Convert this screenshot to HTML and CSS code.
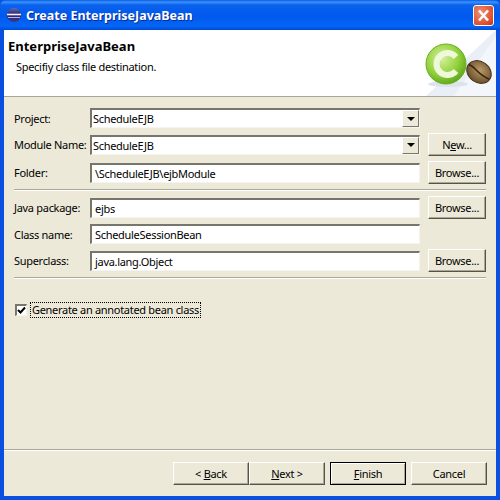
FILE: index.html
```html
<!DOCTYPE html>
<html lang="en">
<head>
    <meta charset="UTF-8">
    <title>Create EnterpriseJavaBean</title>
    <link rel="stylesheet" href="styles.css">
</head>
<body>
<div class="window">
    <div class="titlebar">
        <svg class="app-icon" width="16" height="16" viewBox="0 0 16 16">
            <defs>
                <linearGradient id="eclipseFill" x1="0" y1="0" x2="0" y2="1">
                    <stop offset="0" stop-color="#6a68b8"/>
                    <stop offset="0.45" stop-color="#27256e"/>
                    <stop offset="1" stop-color="#3a3688"/>
                </linearGradient>
            </defs>
            <circle cx="8" cy="8" r="7" fill="url(#eclipseFill)"/>
            <path d="M1 7.5h14" stroke="#f4f2ff" stroke-width="1.6"/>
            <path d="M2 10.5h12" stroke="#b8b4e4" stroke-width="1"/>
        </svg>
        <span class="title">Create EnterpriseJavaBean</span>
        <div class="close">
            <svg width="19" height="19" viewBox="0 0 19 19">
                <path d="M5 4.5l9 10M14 4.5l-9 10" stroke="#fff" stroke-width="2.6"/>
            </svg>
        </div>
    </div>

    <div class="content">
        <div class="banner">
            <div class="banner-text">
                <h1>EnterpriseJavaBean</h1>
                <p>Specifiy class file destination.</p>
            </div>
            <svg class="banner-art" width="76" height="66" viewBox="0 0 76 66">
                <defs>
                    <radialGradient id="ballFill" cx="0.4" cy="0.35" r="0.75">
                        <stop offset="0" stop-color="#d8f0a0"/>
                        <stop offset="0.55" stop-color="#93d23c"/>
                        <stop offset="1" stop-color="#4f9a12"/>
                    </radialGradient>
                    <radialGradient id="beanFill" cx="0.5" cy="0.4" r="0.7">
                        <stop offset="0" stop-color="#b99a6a"/>
                        <stop offset="1" stop-color="#5c4020"/>
                    </radialGradient>
                </defs>
                <polygon points="76,0 76,66 6,66" fill="#eaeff7"/>
                <polygon points="76,6 76,66 34,66" fill="#f3f6fb"/>
                <ellipse cx="28" cy="54" rx="20" ry="3" fill="#dde3ea"/>
                <circle cx="26" cy="34" r="20" fill="url(#ballFill)" stroke="#6cae24"/>
                <path d="M36 27a11 11 0 1 0 0 14" fill="none" stroke="#eef8da" stroke-width="6"/>
                <g transform="rotate(35 59 42)">
                    <ellipse cx="59" cy="42" rx="13" ry="10.5" fill="url(#beanFill)" stroke="#4a3218"/>
                    <path d="M46.5 42c5-3 10 3 25 0" fill="none" stroke="#3a260f" stroke-width="1.6"/>
                </g>
            </svg>
        </div>

        <div class="form">
            <label>Project:</label>
            <div class="combo"><span>ScheduleEJB</span><div class="arrow"></div></div>
            <div></div>

            <label>Module Name:</label>
            <div class="combo"><span>ScheduleEJB</span><div class="arrow"></div></div>
            <button class="btn">N<u>e</u>w...</button>

            <label>Folder:</label>
            <div class="field">\ScheduleEJB\ejbModule</div>
            <button class="btn">Browse...</button>

            <hr class="sep wide">

            <label>Java package:</label>
            <div class="field">ejbs</div>
            <button class="btn">Browse...</button>

            <label>Class name:</label>
            <div class="field">ScheduleSessionBean</div>
            <div></div>

            <label>Superclass:</label>
            <div class="field">java.lang.Object</div>
            <button class="btn">Browse...</button>

            <hr class="sep wide">
        </div>

        <div class="check-row">
            <div class="checkbox">
                <svg width="9" height="9" viewBox="0 0 9 9"><path d="M1 4l2.5 2.5L8 1.5" fill="none" stroke="#000" stroke-width="2"/></svg>
            </div>
            <span class="check-label">Generate an annotated bean class</span>
        </div>

        <div class="footer">
            <hr class="sep">
            <div class="footer-buttons">
                <div class="nav-group">
                    <button class="btn wizard">&lt; <u>B</u>ack</button>
                    <button class="btn wizard"><u>N</u>ext &gt;</button>
                </div>
                <button class="btn wizard default"><u>F</u>inish</button>
                <button class="btn wizard">Cancel</button>
            </div>
        </div>
    </div>
</div>
</body>
</html>
```

FILE: styles.css
```css
* {
    box-sizing: border-box;
}
html, body {
    margin: 0;
    height: 100%;
}
body {
    font-family: "Noto Sans", "Liberation Sans", sans-serif;
    font-size: 11px;
    letter-spacing: -0.3px;
    color: #000;
    background-color: #ece9d8;
}
.window {
    height: 500px;
    display: flex;
    flex-direction: column;
    background: #0a4fe0;
    padding: 0 4px 4px 4px;
}
.titlebar {
    height: 30px;
    margin: 0 -4px;
    padding: 0 6px;
    display: flex;
    align-items: center;
    background: linear-gradient(#0a5ae0 0, #3a93ff 2px, #0a62ec 5px, #0058ee 16px, #0466f5 26px, #0048d8 30px);
    border-radius: 6px 6px 0 0;
}
.app-icon {
    flex: none;
}
.title {
    margin-left: 4px;
    flex: 1;
    color: #fff;
    font-size: 12.5px;
    font-weight: bold;
    letter-spacing: 0;
    text-shadow: 1px 1px 0 #0a2a90;
}
.close {
    width: 21px;
    height: 21px;
    background: radial-gradient(circle at 35% 35%, #ee9078, #de4f2c 70%, #c0300f);
    border: 1px solid #fff;
    border-radius: 3px;
    display: flex;
    align-items: center;
    justify-content: center;
}
.content {
    flex: 1;
    background-color: #ece9d8;
    display: flex;
    flex-direction: column;
}
.banner {
    height: 67px;
    flex: none;
    background-color: #fff;
    border-bottom: 1px solid #a8a59a;
    display: flex;
    justify-content: space-between;
}
.banner-text h1 {
    margin: 8px 0 0 4px;
    font-size: 13px;
    font-weight: bold;
    letter-spacing: 0;
    line-height: 16px;
}
.banner-text p {
    margin: 5px 0 0 12px;
    line-height: 15px;
}
.form {
    display: grid;
    grid-template-columns: 68px 330px 58px;
    column-gap: 8px;
    row-gap: 5px;
    padding: 11px 10px 0 10px;
    align-items: center;
}
.form label {
    white-space: nowrap;
}
.form > div,
.form > button {
    height: 20px;
}
.form .btn {
    height: 23px;
}
.sep {
    margin: 0;
    border: 0;
    border-top: 1px solid #aca899;
    border-bottom: 1px solid #fff;
    height: 2px;
}
.wide {
    grid-column: 1 / -1;
}
.combo, .field {
    background-color: #fff;
    border-top: 2px solid #77756c;
    border-left: 2px solid #77756c;
    border-right: 1px solid #f5f4ee;
    border-bottom: 1px solid #f5f4ee;
    line-height: 17px;
    white-space: nowrap;
}
.combo {
    display: flex;
    justify-content: space-between;
    padding-left: 1px;
}
.field {
    padding-left: 3px;
}
.arrow {
    width: 17px;
    height: 17px;
    background-color: #ece9d8;
    border: 1px solid;
    border-color: #fff #77756c #77756c #fff;
    display: flex;
    align-items: center;
    justify-content: center;
}
.arrow::after {
    content: "";
    border-top: 4px solid #000;
    border-left: 4px solid transparent;
    border-right: 4px solid transparent;
}
.btn {
    font: inherit;
    letter-spacing: inherit;
    padding: 0;
    color: #000;
    background-color: #ece9d8;
    border: 1px solid;
    border-color: #fff #55534a #55534a #fff;
    box-shadow: inset -1px -1px 0 #aca899;
}
.check-row {
    display: flex;
    align-items: center;
    margin: 24px 0 0 11px;
}
.checkbox {
    width: 12px;
    height: 12px;
    background-color: #fff;
    border-top: 2px solid #77756c;
    border-left: 2px solid #77756c;
    border-right: 1px solid #f5f4ee;
    border-bottom: 1px solid #f5f4ee;
    display: flex;
    align-items: center;
    justify-content: center;
}
.check-label {
    margin-left: 4px;
    padding: 0 1px;
    line-height: 14px;
    outline: 1px dotted #000;
}
.footer {
    margin-top: auto;
    padding-bottom: 11px;
}
.footer-buttons {
    display: flex;
    justify-content: flex-end;
    gap: 5px;
    padding: 11px 9px 0 0;
}
.nav-group {
    display: flex;
}
.wizard {
    width: 76px;
    height: 23px;
}
.default {
    outline: 1px solid #000;
    outline-offset: -1px;
    border-color: #000;
    box-shadow: inset 1px 1px 0 #fff, inset -1px -1px 0 #aca899;
}
```
